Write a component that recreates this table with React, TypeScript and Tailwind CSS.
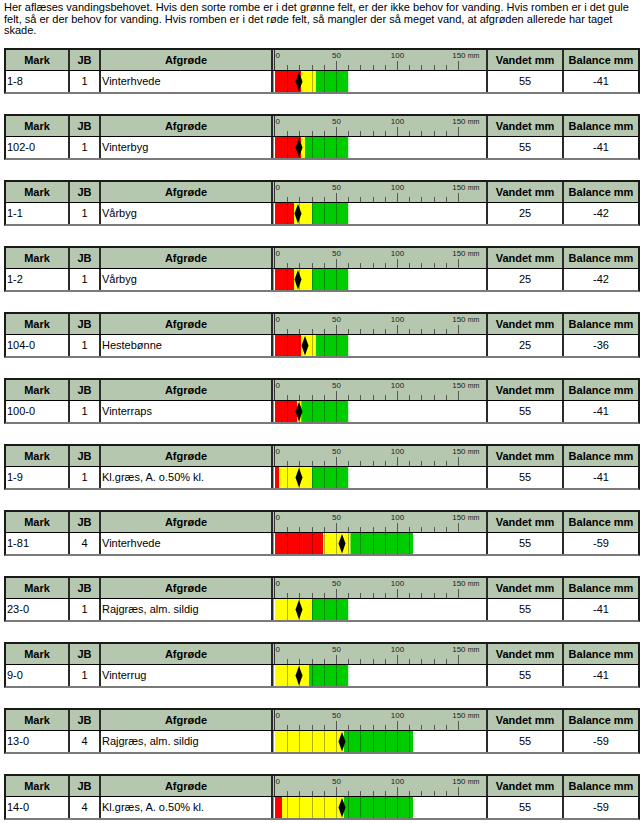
import React from "react";

type Row = {
  mark: string;
  jb: number;
  crop: string;
  red: number;
  yellow: number;
  green: number;
  d: number;
  vandet: number;
  bal: number;
};

const rows: Row[] = [
  { mark: "1-8", jb: 1, crop: "Vinterhvede", red: 26, yellow: 41, green: 73.2, d: 24, vandet: 55, bal: -41 },
  { mark: "102-0", jb: 1, crop: "Vinterbyg", red: 26, yellow: 30, green: 73.2, d: 24, vandet: 55, bal: -41 },
  { mark: "1-1", jb: 1, crop: "Vårbyg", red: 19, yellow: 37, green: 73.2, d: 23, vandet: 25, bal: -42 },
  { mark: "1-2", jb: 1, crop: "Vårbyg", red: 19, yellow: 37, green: 73.2, d: 23, vandet: 25, bal: -42 },
  { mark: "104-0", jb: 1, crop: "Hestebønne", red: 26, yellow: 41, green: 73.2, d: 30, vandet: 25, bal: -36 },
  { mark: "100-0", jb: 1, crop: "Vinterraps", red: 22.3, yellow: 26.3, green: 73.2, d: 24, vandet: 55, bal: -41 },
  { mark: "1-9", jb: 1, crop: "Kl.græs, A. o.50% kl.", red: 4, yellow: 37, green: 73.2, d: 24, vandet: 55, bal: -41 },
  { mark: "1-81", jb: 4, crop: "Vinterhvede", red: 48, yellow: 75.5, green: 138, d: 67, vandet: 55, bal: -59 },
  { mark: "23-0", jb: 1, crop: "Rajgræs, alm. sildig", red: 0, yellow: 37, green: 73.2, d: 24, vandet: 55, bal: -41 },
  { mark: "9-0", jb: 1, crop: "Vinterrug", red: 0, yellow: 34, green: 73.2, d: 24, vandet: 55, bal: -41 },
  { mark: "13-0", jb: 4, crop: "Rajgræs, alm. sildig", red: 0, yellow: 69, green: 138, d: 67, vandet: 55, bal: -59 },
  { mark: "14-0", jb: 4, crop: "Kl.græs, A. o.50% kl.", red: 7, yellow: 69, green: 138, d: 67, vandet: 55, bal: -59 },
];

const ZERO = 2; // px offset of 0 mm inside chart cell
const STEP = 12.2; // px per 10 mm
const CHART_W = 213;

function Scale() {
  const ticks = [];
  for (let k = 1; k <= 15; k++) {
    const x = Math.round(ZERO + STEP * k) + 0.5;
    const major = k % 5 === 0;
    ticks.push(
      <line key={k} x1={x} x2={x} y1={major ? 11 : 15} y2={20} stroke="#555" strokeWidth={1} />
    );
  }
  return (
    <svg width={CHART_W} height={20} className="block">
      <line x1={1.5} x2={1.5} y1={0} y2={20} stroke="#333" strokeWidth={1} />
      {ticks}
      <g fontFamily="'Liberation Sans', Arial, sans-serif" fontSize="8" fill="#222">
        <text x={ZERO + 0.5} y={8}>0</text>
        <text x={ZERO + STEP * 5 + 0.5} y={8} textAnchor="middle">50</text>
        <text x={ZERO + STEP * 10 + 0.5} y={8} textAnchor="middle">100</text>
        <text x={ZERO + STEP * 15 - 5.8} y={8}>
          150 <tspan fontSize="7">mm</tspan>
        </text>
      </g>
    </svg>
  );
}

function Bar({ r }: { r: Row }) {
  const lines = [];
  for (let k = 1; ZERO + STEP * k < ZERO + r.green - 1; k++) {
    const x = Math.round(ZERO + STEP * k) + 0.5;
    lines.push(<line key={k} x1={x} x2={x} y1={0} y2={21} stroke="rgba(0,0,0,0.3)" strokeWidth={1} />);
  }
  const cx = ZERO + r.d;
  return (
    <svg width={CHART_W} height={21} className="block">
      <line x1={0.5} x2={0.5} y1={0} y2={21} stroke="#9a9a9a" strokeWidth={1} />
      {r.red > 0 && <rect x={ZERO} y={0} width={r.red} height={21} fill="#ff0000" />}
      <rect x={ZERO + r.red} y={0} width={r.yellow - r.red} height={21} fill="#ffff00" />
      <rect x={ZERO + r.yellow} y={0} width={r.green - r.yellow} height={21} fill="#00cc00" />
      {lines}
      <polygon
        points={`${cx},1 ${cx + 3.5},10.5 ${cx},20.5 ${cx - 3.5},10.5`}
        fill="#000"
      />
    </svg>
  );
}

function Table({ r }: { r: Row }) {
  const hd = "flex items-center justify-center font-bold text-[11px] text-black";
  return (
    <div className="w-[636px] border-t-2 border-l-2 border-r-2 border-b-2 border-t-[#1a1a1a] border-l-[#1a1a1a] border-r-[#1a1a1a] border-b-[#7a7a7a]">
      <div className="flex h-[21px] bg-[#b6c7b0] border-b border-black">
        <div className={`${hd} w-[62px]`}>Mark</div>
        <div className={`${hd} w-[31px] border-l-2 border-[#2a2a2a]`}>JB</div>
        <div className={`${hd} w-[172px] border-l-2 border-[#2a2a2a]`}>Afgrøde</div>
        <div className="w-[215px] border-l-2 border-[#2a2a2a]">
          <Scale />
        </div>
        <div className={`${hd} w-[76px] border-l-2 border-[#2a2a2a]`}>Vandet mm</div>
        <div className={`${hd} w-[76px] border-l-2 border-[#2a2a2a]`}>Balance mm</div>
      </div>
      <div className="flex h-[21px] bg-white text-[11px] text-black">
        <div className="flex items-center w-[62px] pl-[1px]">{r.mark}</div>
        <div className="flex items-center justify-center w-[31px] border-l-2 border-[#2a2a2a]">{r.jb}</div>
        <div className="flex items-center w-[172px] border-l-2 border-[#2a2a2a] pl-[1px]">{r.crop}</div>
        <div className="w-[215px] border-l-2 border-[#2a2a2a]">
          <Bar r={r} />
        </div>
        <div className="flex items-center justify-center w-[76px] border-l-2 border-[#2a2a2a]">{r.vandet}</div>
        <div className="flex items-center justify-center w-[76px] border-l-2 border-[#2a2a2a]">{r.bal}</div>
      </div>
    </div>
  );
}

export default function App() {
  return (
    <div
      className="w-[642px] min-h-[823px] bg-white text-black pl-[4px] pt-[2px]"
      style={{ fontFamily: "'Liberation Sans', Arial, sans-serif" }}
    >
      <p className="text-[11px] leading-[11.6px] whitespace-nowrap">
        Her aflæses vandingsbehovet. Hvis den sorte rombe er i det grønne felt, er der ikke behov for vanding. Hvis romben er i det gule
        <br />
        felt, så er der behov for vanding. Hvis romben er i det røde felt, så mangler der så meget vand, at afgrøden allerede har taget
        <br />
        skade.
      </p>
      <div className="flex flex-col gap-[20px] mt-[11px]">
        {rows.map((r, i) => (
          <Table key={i} r={r} />
        ))}
      </div>
    </div>
  );
}
